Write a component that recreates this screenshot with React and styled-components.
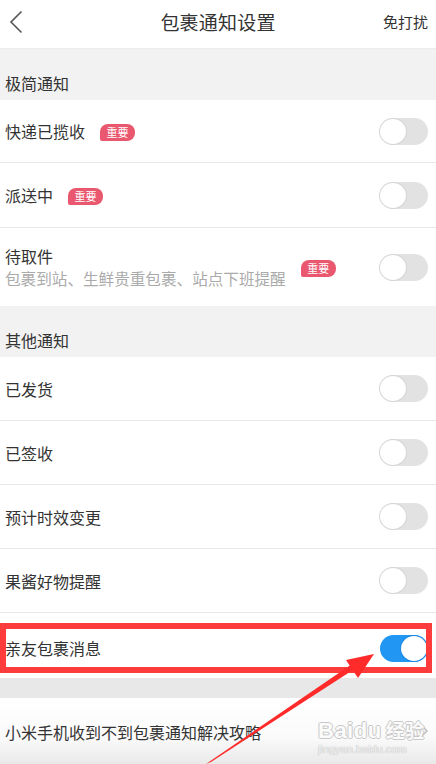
import React from "react";
import styled, { createGlobalStyle } from "styled-components";

const Global = createGlobalStyle`
  html, body { margin: 0; padding: 0; background: #f2f2f2; }
  body { font-family: "Noto Sans CJK SC", "Noto Sans", sans-serif; color: #333; }
  * { box-sizing: border-box; }
`;

const Page = styled.div`
  position: relative;
  width: 436px;
  height: 764px;
  overflow: hidden;
  background: #f2f2f2;
  display: flex;
  flex-direction: column;
`;

const Header = styled.div`
  height: 49px;
  background: #fff;
  display: grid;
  grid-template-columns: 60px 1fr 60px;
  align-items: center;
  padding-bottom: 5px;
  border-bottom: 1px solid #ececec;
`;

const Back = styled.div`
  display: flex;
  align-items: center;
  padding-left: 9px;
`;

const Title = styled.div`
  text-align: center;
  font-size: 19px;
  color: #333;
  letter-spacing: 0.2px;
`;

const Action = styled.div`
  text-align: right;
  font-size: 15px;
  color: #333;
  padding-right: 8px;
`;

const SectionHeader = styled.div`
  height: ${(p) => p.h}px;
  display: flex;
  align-items: flex-end;
  padding: 0 0 6px 5px;
  font-size: 16px;
  line-height: 22px;
  color: #333;
  background: #f2f2f2;
`;

const Row = styled.div`
  position: relative;
  height: ${(p) => p.h || 64}px;
  background: #fff;
  display: flex;
  align-items: center;
  padding: 0 8px 0 5px;
  border-bottom: ${(p) => (p.last ? "none" : "1px solid #e8e8e8")};
`;

const Label = styled.div`
  display: flex;
  align-items: center;
  gap: 15px;
  flex: 1;
  font-size: 16px;
  line-height: 22px;
  color: #333;
  margin-top: ${(p) => p.offset || 0}px;
`;

const Stack = styled.div`
  display: flex;
  flex-direction: column;
`;

const Sub = styled.div`
  font-size: 15.6px;
  line-height: 22px;
  color: #aaa;
`;

const Badge = styled.span`
  display: inline-flex;
  align-items: center;
  justify-content: center;
  width: 35px;
  height: 17px;
  border-radius: 8px 8px 8px 2px;
  background: #ea5870;
  color: #fff;
  font-size: 11px;
  line-height: 17px;
  margin-top: 2px;
`;

const Track = styled.div`
  position: relative;
  width: 48px;
  height: 27px;
  border-radius: 14px;
  background: ${(p) => (p.on ? "#2196f3" : "#e2e2e2")};
  flex-shrink: 0;
`;

const Knob = styled.div`
  position: absolute;
  top: 1px;
  ${(p) => (p.on ? "right: 1px;" : "left: 0px;")}
  width: 26px;
  height: 25px;
  border-radius: 50%;
  background: #fff;
  box-shadow: ${(p) => (p.on ? "0 0 0 1px #1e88e5" : "0 0 0 1px #d6d6d6")};
`;

const Toggle = ({ on }) => (
  <Track on={on ? 1 : 0}>
    <Knob on={on ? 1 : 0} />
  </Track>
);

const ToggleSlot = styled.div`
  margin-top: ${(p) => p.offset || 0}px;
`;

const Gap = styled.div`
  height: 20px;
  background: #e8e8e8;
`;

const LinkRow = styled.div`
  position: relative;
  flex: 1;
  display: flex;
  align-items: center;
  padding: 0 8px 0 5px;
  background: linear-gradient(#ffffff 0%, #fafafa 60%, #e9e9e9 100%);
  font-size: 16px;
  color: #333;
`;

const LinkText = styled.div`
  flex: 1;
  margin-top: 2px;
`;

const Highlight = styled.div`
  position: absolute;
  left: 0;
  top: 10px;
  right: 4px;
  bottom: 5px;
  border: 6px solid #ff3b3b;
  pointer-events: none;
`;

const Watermark = styled.div`
  position: absolute;
  left: 318px;
  top: 20px;
  display: flex;
  flex-direction: column;
  align-items: flex-start;
  color: #fbfbfb;
  text-shadow: 1px 0 0 #c8c8c8, -1px 0 0 #c8c8c8, 0 1px 0 #c8c8c8, 0 -1px 0 #c8c8c8;
`;

const WmMain = styled.div`
  font-family: "Liberation Sans", Arial, sans-serif;
  font-weight: bold;
  font-size: 22px;
  line-height: 24px;
  letter-spacing: 0.5px;
  span { font-family: "Noto Sans CJK SC", sans-serif; font-size: 19px; margin-left: 4px; }
`;

const WmSub = styled.div`
  font-family: "Liberation Sans", Arial, sans-serif;
  font-size: 11px;
  line-height: 12px;
  color: #f2f2f2;
  text-shadow: 0 0 1px #bdbdbd, 0 0 1px #bdbdbd;
`;

const Overlay = styled.svg`
  position: absolute;
  left: 0;
  top: 0;
  pointer-events: none;
`;

const rowsA = [
  { label: "快递已揽收", h: 63 },
  { label: "派送中", h: 65 },
];

const rowsB = ["已发货", "已签收", "预计时效变更", "果酱好物提醒"];

export default function App() {
  return (
    <>
      <Global />
      <Page>
        <Header>
          <Back>
            <svg width="14" height="24" viewBox="0 0 14 24">
              <path d="M12.5 1.5 L2 12 L12.5 22.5" fill="none" stroke="#555" strokeWidth="1.6" />
            </svg>
          </Back>
          <Title>包裹通知设置</Title>
          <Action>免打扰</Action>
        </Header>

        <SectionHeader h={51}>极简通知</SectionHeader>
        {rowsA.map((r) => (
          <Row key={r.label} h={r.h}>
            <Label>
              {r.label}
              <Badge>重要</Badge>
            </Label>
            <Toggle />
          </Row>
        ))}
        <Row h={78} last>
          <Label>
            <Stack>
              待取件
              <Sub>包裹到站、生鲜贵重包裹、站点下班提醒</Sub>
            </Stack>
            <Badge>重要</Badge>
          </Label>
          <Toggle />
        </Row>

        <SectionHeader h={51}>其他通知</SectionHeader>
        {rowsB.map((l) => (
          <Row key={l} h={64}>
            <Label>{l}</Label>
            <Toggle />
          </Row>
        ))}
        <Row h={65} last>
          <Label offset={5}>亲友包裹消息</Label>
          <ToggleSlot offset={5}>
            <Toggle on />
          </ToggleSlot>
          <Highlight />
        </Row>

        <Gap />
        <LinkRow>
          <LinkText>小米手机收到不到包裹通知解决攻略</LinkText>
          <svg width="8" height="14" viewBox="0 0 8 14">
            <path d="M1 1 L7 7 L1 13" fill="none" stroke="#bbb" strokeWidth="1.4" />
          </svg>
          <Watermark>
            <WmMain>
              Baidu<span>经验</span>
            </WmMain>
            <WmSub>jingyan.baidu.com</WmSub>
          </Watermark>
        </LinkRow>

        <Overlay width="436" height="764" viewBox="0 0 436 764">
          <polygon points="206,764 211,762 356,668 352,664" fill="#ff2a2a" />
          <polygon points="374,654 346,660 358,678" fill="#ff2a2a" />
        </Overlay>
      </Page>
    </>
  );
}
